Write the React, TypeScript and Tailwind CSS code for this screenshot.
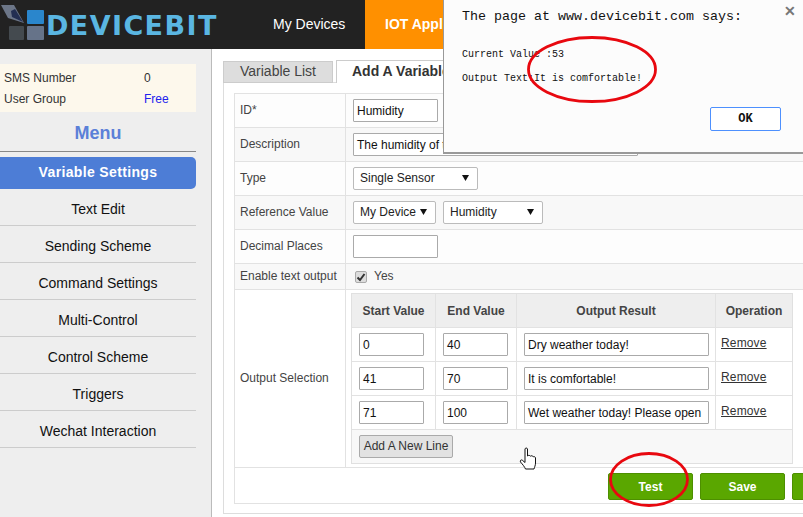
import React from "react";

const menu = ["Text Edit","Sending Scheme","Command Settings","Multi-Control","Control Scheme","Triggers","Wechat Interaction"];

function Input({ value, className }: { value?: string; className: string }) {
  return (
    <div className={`h-[23px] border border-[#aaa] bg-white text-[12px] leading-[22px] px-[3px] text-[#111] whitespace-nowrap overflow-hidden rounded-[1px] ${className}`}>
      {value}
    </div>
  );
}

function Select({ value, className }: { value: string; className: string }) {
  return (
    <div className={`h-[23px] border border-[#bbb] bg-white text-[12px] leading-[21px] pl-[6px] pr-[8px] flex items-center justify-between rounded-[2px] text-[#222] ${className}`}>
      <span>{value}</span>
      <svg width="7" height="6" viewBox="0 0 7 6" className="-mt-[2px]"><path d="M0 0h7L3.500 6z" fill="#111" /></svg>
    </div>
  );
}

function Row({ label, shade, height, children }: { label: string; shade?: boolean; height: string; children: React.ReactNode }) {
  return (
    <div className={`flex border-b border-[#e2e2e2] ${height} ${shade ? "bg-[#f8f8f8]" : "bg-[#fdfdfd]"}`}>
      <div className="w-[111px] shrink-0 border-r border-[#e2e2e2] pl-[5px] pb-[1px] flex items-center text-[12px] text-[#444] whitespace-nowrap">{label}</div>
      <div className="flex-1 flex items-center pl-[7px] gap-[7px]">{children}</div>
    </div>
  );
}

const rows = [
  ["0","40","Dry weather today!"],
  ["41","70","It is comfortable!"],
  ["71","100","Wet weather today! Please open"],
];

function Logo() {
  return (
    <div className="flex items-center h-full">
      <svg width="46" height="49" viewBox="0 0 46 49" className="shrink-0">
        <path d="M1 5 L14 5 L24 23 L8 18 Z" fill="#6c7688" />
        <path d="M11 11 L15 9 L23 22 L12 17 Z" fill="#232f52" />
        <rect x="27" y="10" width="17" height="14" rx="1" fill="#2a86cc" />
        <rect x="9" y="26" width="15" height="14" rx="1" fill="#444a4f" />
        <rect x="27" y="26" width="17" height="14" rx="1" fill="#667389" />
      </svg>
      <span className="font-['DejaVu_Sans'] font-bold text-[27px] leading-none text-[#5ab6e2] tracking-[1.4px] mt-[1px] whitespace-nowrap">DEVICEBIT</span>
    </div>
  );
}

export default function App() {
  return (
    <div className="relative w-[803px] h-[517px] overflow-hidden bg-white font-['Liberation_Sans',Arial,sans-serif]">
      <header className="h-[49px] bg-[#222] flex">
        <div className="w-[273px] shrink-0 overflow-hidden"><Logo /></div>
        <div className="w-[92px] flex items-center text-white text-[14px]">My Devices</div>
        <div className="w-[130px] bg-[#ff9000] flex items-center pl-[20px] text-white font-bold text-[14px] whitespace-nowrap">IOT Application</div>
      </header>
      <div className="flex h-[468px]">
        <aside className="w-[212px] shrink-0 bg-[#eee] border-r border-[#bbb] pt-[15px]">
          <div className="w-[196px] h-[48px] bg-[#fdf8ec] pl-[4px] pt-[3px] text-[12px] text-[#333]">
            <div className="flex h-[21px] items-center"><span className="w-[140px]">SMS Number</span><span>0</span></div>
            <div className="flex h-[21px] items-center"><span className="w-[140px]">User Group</span><span className="text-[#2222ee]">Free</span></div>
          </div>
          <div className="w-[196px] h-[40px] border-b border-[#888] pt-[3px] flex items-center justify-center text-[18px] font-bold text-[#5b80d8]">Menu</div>
          <div className="w-[196px] mt-[5px]">
            <div className="h-[32px] pb-[1px] bg-[#4d7dd6] rounded-r-[5px] flex items-center justify-center text-white font-bold text-[14px] tracking-[0.35px]">Variable Settings</div>
            {menu.map((m) => (
              <div key={m} className="h-[37px] pt-[4px] border-b border-[#ccc] flex items-center justify-center text-[14px] text-[#111]">{m}</div>
            ))}
          </div>
        </aside>
        <main className="flex-1 pl-[11px] pt-[11px] overflow-hidden">
          <div className="flex h-[23px] items-end">
            <div className="w-[110px] h-[22px] bg-[#ddd] border border-[#ccc] pb-[1px] flex items-center justify-center text-[14px] text-[#444]">Variable List</div>
            <div className="ml-[3px] w-[200px] h-[23px] bg-white border border-b-0 border-[#ccc] pl-[15px] pb-[1px] flex items-center text-[14px] font-bold text-[#333] whitespace-nowrap relative">Add A Variable</div>
          </div>
          <div className="w-[640px] h-[432px] border border-[#ddd] -mt-[1px] pl-[10px] pt-[10px]">
            <div className="w-[620px] border border-[#e2e2e2] h-[411px]">
              <Row label="ID*" height="h-[34px]"><Input value="Humidity" className="w-[85px]" /></Row>
              <Row label="Description" shade height="h-[34px]"><Input value="The humidity of the room" className="w-[285px]" /></Row>
              <Row label="Type" height="h-[34px]"><Select value="Single Sensor" className="w-[125px]" /></Row>
              <Row label="Reference Value" shade height="h-[34px]">
                <Select value="My Device" className="w-[83px] pr-[6px]" />
                <Select value="Humidity" className="w-[100px]" />
              </Row>
              <Row label="Decimal Places" height="h-[34px]"><Input className="w-[85px]" /></Row>
              <Row label="Enable text output" shade height="h-[26px]">
                <span className="w-[12px] h-[12px] bg-[#ddd] border border-[#aaa] rounded-[2px] flex items-center justify-center ml-[2px]">
                  <svg width="10" height="10" viewBox="0 0 10 10"><path d="M1.500 5.500 L4 8 L8.500 2" fill="none" stroke="#333" strokeWidth="2" /></svg>
                </span>
                <span className="text-[12px] text-[#444] pb-[1px]">Yes</span>
              </Row>
              <div className="flex h-[178px] border-b border-[#e2e2e2]">
                <div className="w-[111px] shrink-0 border-r border-[#e2e2e2] pl-[5px] pb-[1px] flex items-center text-[12px] text-[#444]">Output Selection</div>
                <div className="pl-[5px] pt-[3px]">
                  <div className="w-[442px] h-[171px] border border-[#e0e0e0] text-[12px]">
                    <div className="flex h-[34px] bg-[#eee] border-b border-[#e2e2e2] font-bold text-[#444]">
                      <div className="w-[84px] border-r border-[#e2e2e2] flex items-center justify-center">Start Value</div>
                      <div className="w-[81px] border-r border-[#e2e2e2] flex items-center justify-center">End Value</div>
                      <div className="w-[199px] border-r border-[#e2e2e2] flex items-center justify-center">Output Result</div>
                      <div className="flex-1 flex items-center justify-center">Operation</div>
                    </div>
                    {rows.map(([a, b, c]) => (
                      <div key={a} className="flex h-[34px] border-b border-[#e2e2e2]">
                        <div className="w-[84px] border-r border-[#e2e2e2] flex items-center pl-[7px]"><Input value={a} className="w-[65px]" /></div>
                        <div className="w-[81px] border-r border-[#e2e2e2] flex items-center pl-[7px]"><Input value={b} className="w-[65px]" /></div>
                        <div className="w-[199px] border-r border-[#e2e2e2] flex items-center pl-[7px]"><Input value={c} className="w-[185px]" /></div>
                        <div className="flex-1 flex items-center pl-[5px] pb-[3px] text-[#333] underline tracking-[0.15px]">Remove</div>
                      </div>
                    ))}
                    <div className="h-[33px] bg-[#f8f8f8] flex items-center pl-[7px]">
                      <div className="w-[94px] h-[23px] pb-[1px] bg-[#e2e2e2] border border-[#aaa] rounded-[2px] flex items-center justify-center text-[#333]">Add A New Line</div>
                    </div>
                  </div>
                </div>
              </div>
              <div className="h-[36px] flex items-center pl-[373px] gap-[7px]">
                {["Test","Save",""].map((b, i) => (
                  <div key={i} className="w-[85px] h-[27px] pt-[1px] shrink-0 bg-[#5aa700] border border-[#4d8f00] rounded-[2px] flex items-center justify-center text-white text-[12px] font-bold">{b}</div>
                ))}
              </div>
            </div>
          </div>
        </main>
      </div>

      {/* Browser alert */}
      <div className="absolute left-[443px] top-0 w-[360px] h-[154px] bg-[#fcfcfc] border-l border-b-2 border-[#999] font-['Liberation_Mono',monospace] text-[#111]">
        <div className="absolute left-[18px] top-[8px] text-[13.33px] leading-[18px] whitespace-nowrap">The page at www.devicebit.com says:</div>
        <div className="absolute left-[18px] top-[48px] text-[10px] leading-[14px] whitespace-nowrap">Current Value :53</div>
        <div className="absolute left-[18px] top-[72px] text-[10px] leading-[14px] whitespace-nowrap">Output Text:It is comfortable!</div>
        <div className="absolute right-[7px] top-[4px] text-[#777] font-['Liberation_Sans'] font-bold text-[14px] leading-[14px]">✕</div>
        <div className="absolute left-[266px] top-[107px] w-[71px] h-[24px] bg-white border border-[#4d90fe] rounded-[2px] flex items-center justify-center font-bold text-[12px]">OK</div>
      </div>

      {/* Red annotations */}
      <svg className="absolute left-[525px] top-[35px] pointer-events-none" width="134" height="70" viewBox="0 0 134 70">
        <ellipse cx="67" cy="34.500" rx="63.500" ry="32" fill="none" stroke="#e8080f" strokeWidth="2.800" />
      </svg>
      <svg className="absolute left-[607px] top-[450px] pointer-events-none" width="84" height="60" viewBox="0 0 84 60">
        <ellipse cx="42" cy="29.500" rx="38.500" ry="26" fill="none" stroke="#e8080f" strokeWidth="2.800" />
      </svg>
      {/* Hand cursor */}
      <svg className="absolute left-[519px] top-[447px]" width="19" height="24" viewBox="0 0 19 24">
        <path d="M6 2c.2-1.300 2.300-1.300 2.500 0v7c1-1 2.300-.8 2.800.2 1-.8 2.500-.5 3 .6 1-.5 2.200.2 2.200 1.200v5c0 2.500-1 4-1.500 6H6.500c-.8-2-2.800-4.500-5-7-.8-1.200.5-2.700 1.800-1.800L6 15.500z" fill="#fff" stroke="#111" strokeWidth="1" />
      </svg>
    </div>
  );
}
